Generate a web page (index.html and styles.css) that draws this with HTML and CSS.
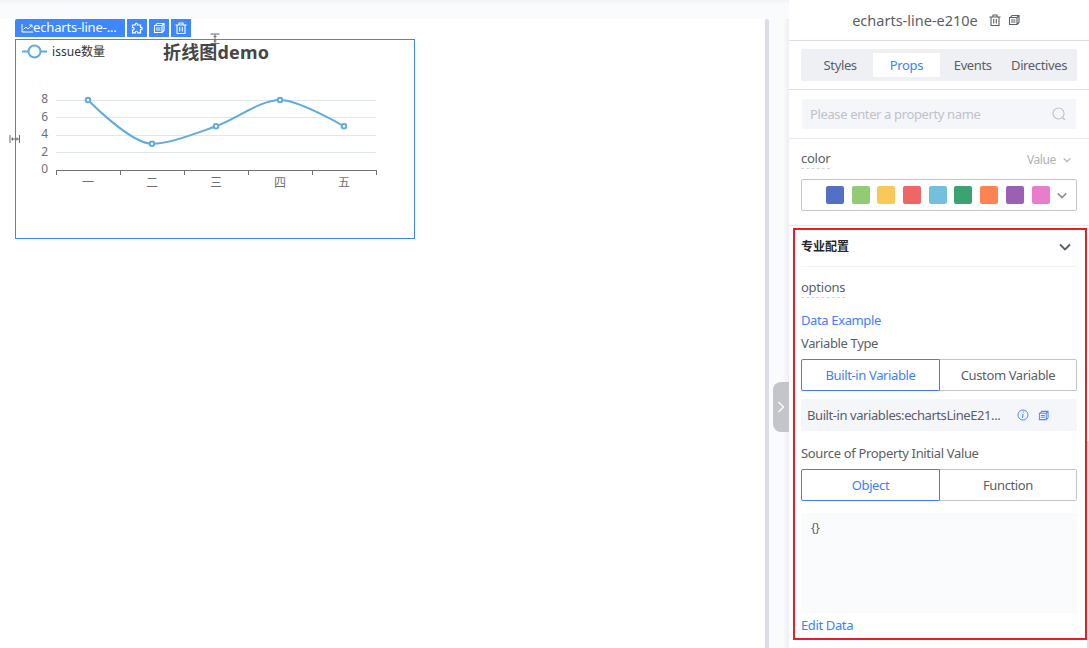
FILE: index.html
```html
<!DOCTYPE html>
<html lang="en">
<head>
<meta charset="utf-8">
<title>Designer</title>
<link rel="stylesheet" href="styles.css">
</head>
<body>
<svg class="defs" width="0" height="0">
  <symbol id="copy" viewBox="0 0 12 12"><path d="M2.500 3.500L4 1.500H11V8.500L9 10.500M1.500 3.500H9V10.500H1.500ZM3 6H7.500M3 8H7.500M9 3.500L11 1.500" fill="none" stroke="currentColor" stroke-width="1.100"/></symbol>
  <symbol id="trash" viewBox="0 0 12 12"><path d="M.5 3h11M4 2.800V1h4v1.800M2 3v8.500h8V3M4.700 5v4.500M7.300 5v4.500" fill="none" stroke="currentColor" stroke-width="1.100"/></symbol>
  <symbol id="down" viewBox="0 0 12 8"><path d="M1 1.500l5 5 5-5" fill="none" stroke="currentColor" stroke-width="1.900"/></symbol>
</svg>
<div class="app">
  <main class="workspace">
    <div class="canvas">
      <div class="toolbar">
        <div class="tool name"><svg width="12" height="10" viewBox="0 0 12 10"><path d="M1 1v8h11M2.500 6.500L5 4l2 2 4-4M8.500 2H11v2.300" fill="none" stroke="currentColor"/></svg><span>echarts-line-...</span></div>
        <div class="tool"><svg width="12" height="12" viewBox="0 0 12 12"><path d="M1.500 3H4.300C3.500 .8 7.300 .8 6.500 3H9.500V5.500C11.700 4.700 11.700 8.300 9.500 7.500V10.800H6.700C7.200 8.700 3.800 8.700 4.300 10.800H1.500V8C3.600 8.400 3.600 5.100 1.500 5.500Z" fill="none" stroke="currentColor" stroke-width="1.200"/></svg></div>
        <div class="tool"><svg width="12" height="12"><use href="#copy"/></svg></div>
        <div class="tool"><svg width="12" height="12"><use href="#trash"/></svg></div>
      </div>
      <div class="chart">
        <svg width="398" height="198" viewBox="16 40 398 198">
          <path class="series" d="M22 51.500H47"/>
          <circle class="dot" cx="34.500" cy="51.500" r="6"/>
          <text class="legend" x="52" y="55.500" textLength="53">issue数量</text>
          <text class="title" x="163" y="59" textLength="106">折线图demo</text>
          <path class="grid" d="M56 100.500H376M56 117.500H376M56 135.500H376M56 152.500H376"/>
          <path class="axis" d="M56 170.500H377M56.500 170V175M120.500 170V175M184.500 170V175M248.500 170V175M312.500 170V175M376.500 170V175"/>
          <g class="ylab"><text x="48" y="103">8</text><text x="48" y="121">6</text><text x="48" y="138">4</text><text x="48" y="156">2</text><text x="48" y="173">0</text></g>
          <g class="xlab"><text x="88" y="187">一</text><text x="152" y="187">二</text><text x="216" y="187">三</text><text x="280" y="187">四</text><text x="344" y="187">五</text></g>
          <path class="series" d="M88 100C88 100 130.500 143.750 152 143.750C170 143.750 195 133.500 216 126.250C236.500 119 260 100 280 100C299 100 344 126.250 344 126.250"/>
          <g class="dot"><circle cx="88" cy="100" r="2.300"/><circle cx="152" cy="143.750" r="2.300"/><circle cx="216" cy="126.250" r="2.300"/><circle cx="280" cy="100" r="2.300"/><circle cx="344" cy="126.250" r="2.300"/></g>
        </svg>
        <svg class="handle top" width="10" height="12" viewBox="0 0 10 12"><path d="M.5 1h9M.5 10.500h9M5 1v9.500M3.500 3.500h3M3.500 8h3"/></svg>
        <svg class="handle left" width="12" height="10" viewBox="0 0 12 10"><path d="M1 1v8M10.500 1v8M2 5h8M3.500 3.500v3M8 3.500v3"/></svg>
      </div>
    </div>
    <div class="track"></div>
    <div class="gutter"><button class="collapse"><svg width="8" height="12" viewBox="0 0 8 12"><path d="M1.500 1l5 5-5 5" fill="none" stroke="#fff" stroke-width="1.300"/></svg></button></div>
  </main>
  <aside class="panel">
    <header class="head"><span class="heading">echarts-line-e210e</span><svg width="12" height="12"><use href="#trash"/></svg><svg width="12" height="12"><use href="#copy"/></svg></header>
    <div class="tabwrap"><nav class="tabs"><span class="tab">Styles</span><span class="tab active">Props</span><span class="tab">Events</span><span class="tab">Directives</span></nav></div>
    <div class="searchwrap"><div class="search"><span class="ph">Please enter a property name</span><svg width="14" height="14" viewBox="0 0 14 14"><circle cx="6.500" cy="6.500" r="5.500" fill="none" stroke="currentColor" stroke-width="1.200"/><path d="M10.500 10.500L13 13" stroke="currentColor" stroke-width="1.200"/></svg></div></div>
    <section class="colors">
      <div class="row"><span class="prop">color</span><span class="value"><span>Value</span><svg width="8" height="6"><use href="#down"/></svg></span></div>
      <div class="palette"><i class="s1"></i><i class="s2"></i><i class="s3"></i><i class="s4"></i><i class="s5"></i><i class="s6"></i><i class="s7"></i><i class="s8"></i><i class="s9"></i><svg width="10" height="7"><use href="#down"/></svg></div>
    </section>
    <section class="config">
      <div class="confhead"><b>专业配置</b><svg width="12" height="8"><use href="#down"/></svg></div>
      <div class="options"><span class="prop">options</span></div>
      <a class="link example">Data Example</a>
      <div class="label vtype">Variable Type</div>
      <div class="seg"><span class="on">Built-in Variable</span><span>Custom Variable</span></div>
      <div class="builtin"><span class="vars">Built-in variables:echartsLineE21...</span><svg width="12" height="12" viewBox="0 0 12 12"><circle cx="6" cy="6" r="5" fill="none" stroke="currentColor"/><path d="M6.500 2.700l-.2 1M6 5L5.400 9" stroke="currentColor" stroke-width="1.200"/></svg><svg width="11" height="11"><use href="#copy"/></svg></div>
      <div class="label source">Source of Property Initial Value</div>
      <div class="seg"><span class="on">Object</span><span>Function</span></div>
      <div class="code">{}</div>
      <a class="link edit">Edit Data</a>
    </section>
    <div class="thumb"></div>
  </aside>
</div>
</body>
</html>
```
FILE: styles.css
```css
* { box-sizing: border-box; }
body { margin: 0; font: 13px/20px "Noto Sans", "Noto Sans CJK SC", sans-serif; color: #5a5e66; background: #fff; }
svg { display: block; flex: none; }
.defs { position: absolute; }
.app { display: flex; width: 1089px; height: 648px; overflow: hidden; }
.workspace { display: flex; width: 789px; padding-top: 19px; background: linear-gradient(#f1f2f5, #fafbfd 4px); }
.canvas { width: 765px; background: #fff; padding-left: 15px; }
.track { width: 4px; background: #dcdde6; border-radius: 2px 2px 0 0; }
.gutter { width: 20px; padding: 363px 0 0 4px; background: linear-gradient(90deg, #fafbfd 14px, #eeeff2); }
.collapse { display: flex; width: 16px; height: 50px; padding: 0 0 0 4px; align-items: center; border: 0; border-radius: 8px 0 0 8px; background: #c4c5ca; }
.toolbar { display: flex; gap: 2px; height: 20px; }
.tool { display: flex; width: 20px; height: 18px; align-items: center; justify-content: center; background: #3d87ff; color: #fff; }
.tool.name { width: 110px; justify-content: flex-start; padding-left: 6px; line-height: 17px; border-radius: 2px 0 0 0; }
.tool.name span { height: 18px; letter-spacing: -.15px; }
.chart { position: relative; width: 400px; height: 200px; border: 1px solid #3d85f2; }
.series { fill: none; stroke: #5fabdf; stroke-width: 2; }
.dot { fill: #fff; stroke: #5fabdf; stroke-width: 2; }
.grid { stroke: #e0e6f1; }
.axis { stroke: #6e7079; }
.legend { font-size: 12px; fill: #333; }
.title { font-size: 18px; font-weight: 700; fill: #464646; }
.ylab { font-size: 12px; fill: #6e7079; text-anchor: end; }
.xlab { font-size: 12px; fill: #6e7079; text-anchor: middle; }
.handle { position: absolute; fill: none; stroke: #6b6b6b; }
.handle.top { left: 194px; top: -7px; }
.handle.left { left: -7px; top: 94px; }
.panel { position: relative; width: 300px; background: #fff; letter-spacing: -.37px; }
.head { display: flex; height: 41px; align-items: center; justify-content: center; gap: 7px; border-bottom: 1px solid #dcdde6; padding: 0 6px 0 0; }
.heading { font-size: 14.5px; letter-spacing: 0; margin-right: 4px; }
.tabwrap { height: 49px; padding: 8px 12px; border-bottom: 1px solid #dcdde6; }
.tabs { display: flex; height: 32px; padding: 4px 6px; background: #eff0f4; border-radius: 2px; }
.tab { width: 66.300px; flex: none; text-align: center; line-height: 24px; white-space: nowrap; }
.tab.active { background: #fff; color: #3d7fff; }
.searchwrap { height: 49px; padding: 9px 13px; border-bottom: 1px solid #e7e8ec; }
.search { display: flex; height: 30px; padding: 0 10px 0 8px; align-items: center; justify-content: space-between; background: #f5f6fa; color: #c0c2c9; }
.colors { height: 87px; padding: 10px 12px 0; border-bottom: 1px solid #e7e8ec; }
.row { display: flex; height: 30px; justify-content: space-between; }
.prop { height: 20px; line-height: 18px; letter-spacing: -.25px; border-bottom: 1px dashed #d4d6dc; }
.value { display: flex; height: 22px; align-items: center; gap: 7px; padding-right: 6px; font-size: 12px; color: #aeb0b8; }
.palette { display: flex; height: 32px; align-items: center; gap: 7.700px; padding-left: 24px; border: 1px solid #c3c4c9; border-radius: 2px; color: #8b8e99; }
.palette i { width: 18px; height: 18px; border-radius: 2px; }
.s1 { background: #5470c6; } .s2 { background: #91cc75; } .s3 { background: #fac858; }
.s4 { background: #ee6666; } .s5 { background: #73c0de; } .s6 { background: #3ba272; }
.s7 { background: #fc8452; } .s8 { background: #9a60b4; } .s9 { background: #ea7ccc; }
.config { width: 294px; height: 412px; margin: 2px 0 0 4px; padding: 0 8px 0 6px; border: 2px solid #ed1c24; }
.confhead { display: flex; height: 37px; align-items: center; justify-content: space-between; padding: 0 6px 2px 0; border-bottom: 1px solid #f2f3f5; font-size: 12px; letter-spacing: 0; color: #25272d; }
.confhead svg { color: #5a5e66; }
.options { display: flex; height: 43px; padding-top: 11px; }
.link { display: block; color: #3d7fff; }
.example { height: 23px; }
.vtype { height: 26px; }
.seg { display: flex; height: 32px; width: 276px; }
.seg span { flex: 1; text-align: center; line-height: 30px; border: 1px solid #c3c4c9; border-left: 0; border-radius: 0 2px 2px 0; }
.seg .on { flex: 0 0 139px; color: #3d7fff; border: 1px solid #3d7fff; border-radius: 2px 0 0 2px; }
.builtin { display: flex; height: 32px; margin-top: 8px; padding-left: 6px; align-items: center; background: #f5f6fa; border-radius: 2px; }
.vars { width: 210px; white-space: nowrap; letter-spacing: -.42px; }
.builtin svg { color: #4d88ff; margin-right: 9px; }
.source { margin-top: 12px; height: 26px; letter-spacing: -.34px; }
.code { height: 100px; margin-top: 12px; padding: 5px 10px; background: #fafbfd; font-size: 12px; }
.edit { margin-top: 2px; }
.thumb { position: absolute; right: 0; top: 441px; width: 2px; height: 207px; background: #dcdde2; }
```
